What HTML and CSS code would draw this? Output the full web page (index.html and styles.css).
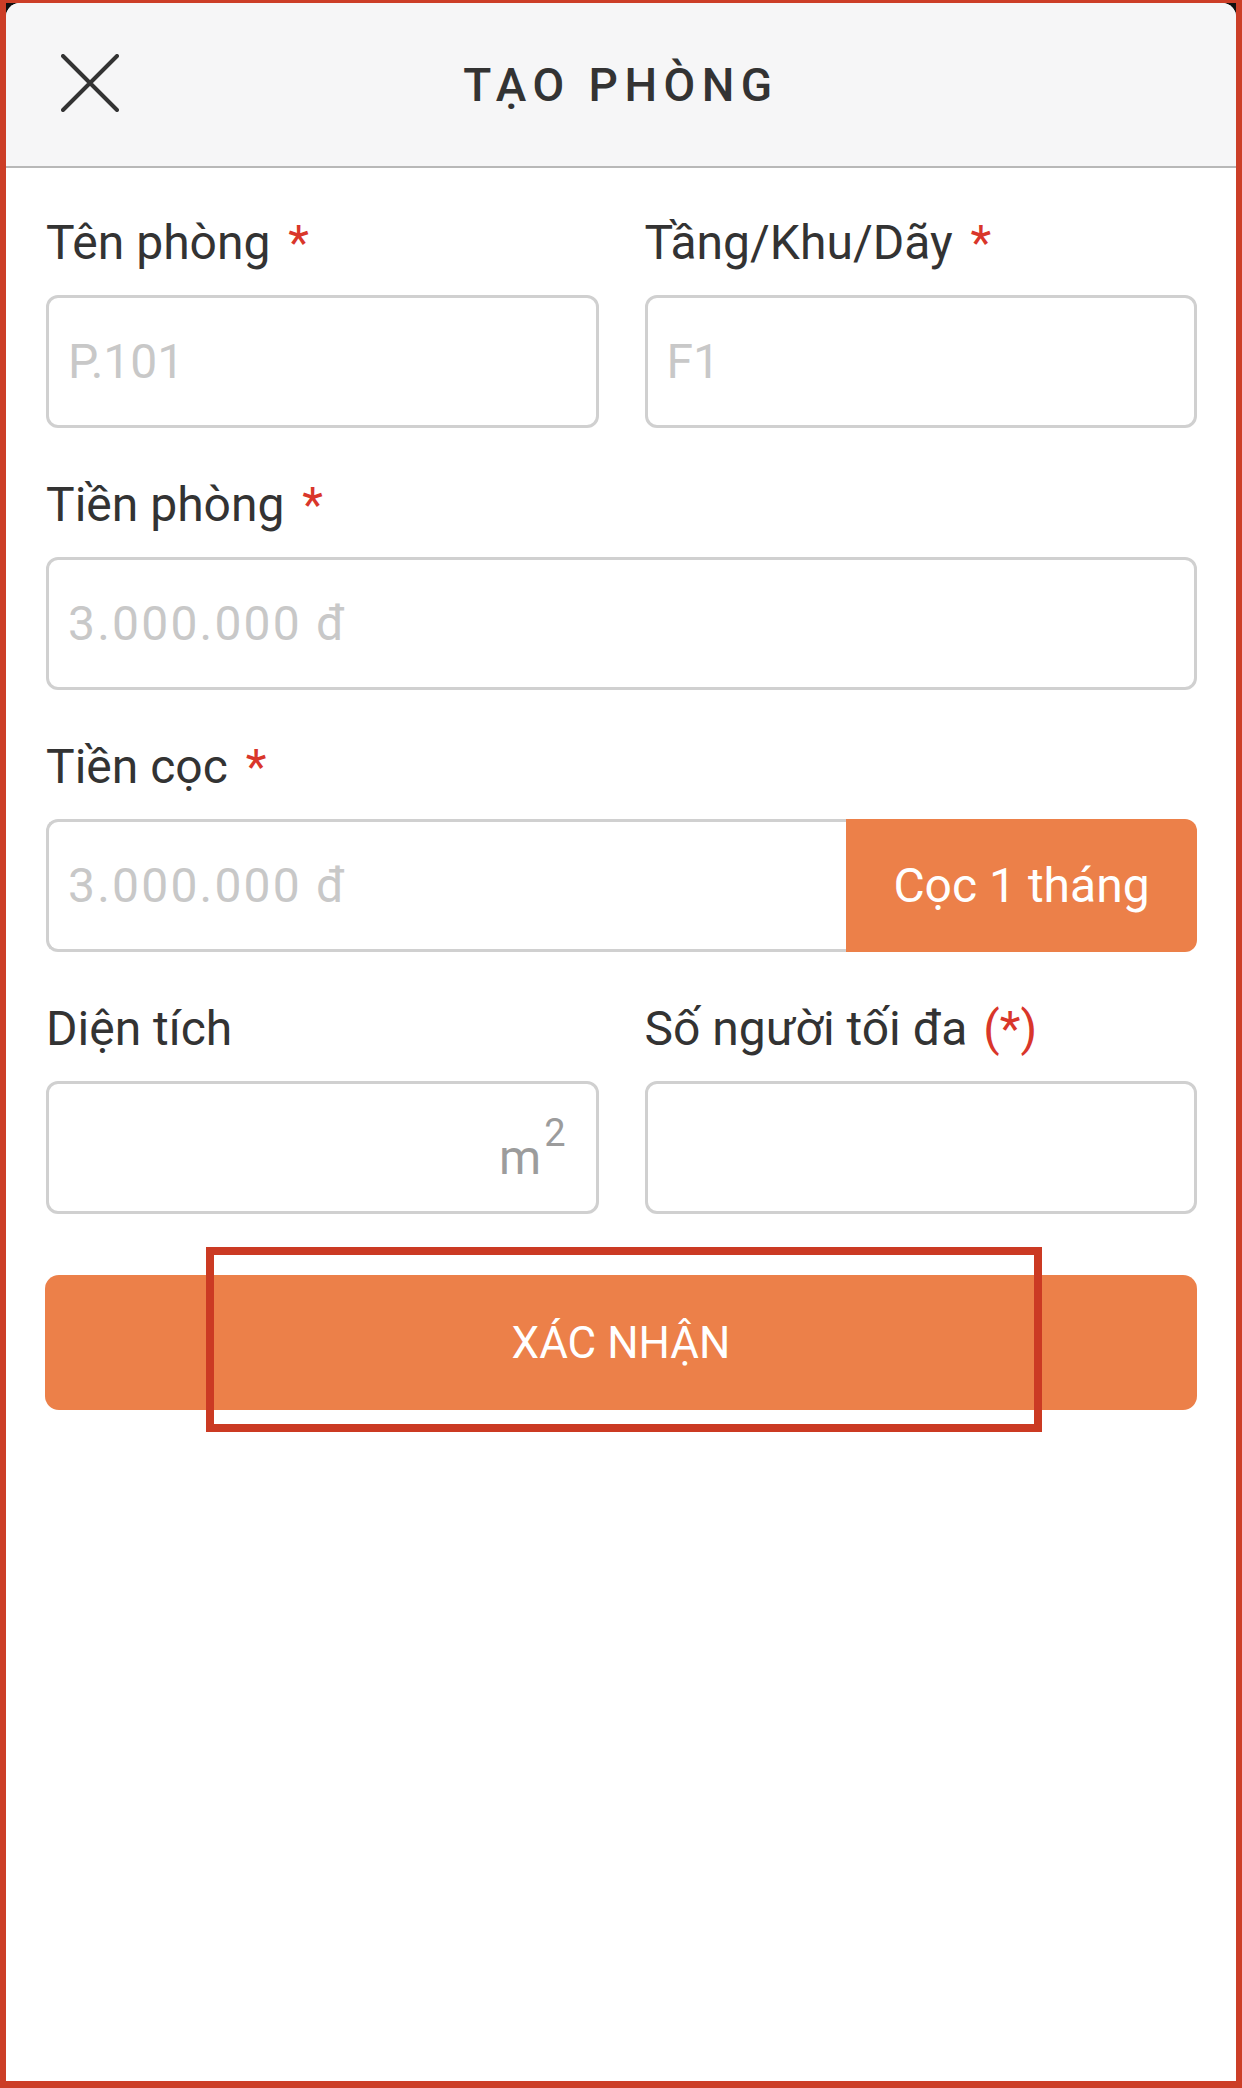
FILE: index.html
```html
<!DOCTYPE html>
<html lang="vi">
<head>
<meta charset="utf-8">
<title>Tạo phòng</title>
<link rel="stylesheet" href="styles.css">
</head>
<body>
<div class="frame">
  <div class="screen">
    <div class="sheet">
      <header class="header">
        <button class="close" aria-label="Đóng">
          <svg width="58" height="58" viewBox="0 0 58 58"><path d="M2 2 L56 56 M56 2 L2 56" stroke="#333" stroke-width="4" stroke-linecap="round" fill="none"/></svg>
        </button>
        <h1 class="title">TẠO PHÒNG</h1>
        <span class="spacer"></span>
      </header>

      <form class="form">
        <div class="row two">
          <div class="field">
            <label class="label">Tên phòng <span class="req">*</span></label>
            <div class="input"><span class="ph">P.101</span></div>
          </div>
          <div class="field">
            <label class="label">Tầng/Khu/Dãy <span class="req">*</span></label>
            <div class="input"><span class="ph">F1</span></div>
          </div>
        </div>

        <div class="row">
          <div class="field">
            <label class="label">Tiền phòng <span class="req">*</span></label>
            <div class="input"><span class="ph money">3.000.000 đ</span></div>
          </div>
        </div>

        <div class="row">
          <div class="field">
            <label class="label">Tiền cọc <span class="req">*</span></label>
            <div class="combo">
              <div class="input combo-input"><span class="ph money">3.000.000 đ</span></div>
              <div class="combo-btn">Cọc 1 tháng</div>
            </div>
          </div>
        </div>

        <div class="row two">
          <div class="field">
            <label class="label">Diện tích</label>
            <div class="input unit-input"><span class="unit">m<sup>2</sup></span></div>
          </div>
          <div class="field">
            <label class="label">Số người tối đa <span class="req paren">(*)</span></label>
            <div class="input"></div>
          </div>
        </div>

        <div class="submit-wrap">
          <div class="submit">XÁC NHẬN</div>
          <div class="highlight"></div>
        </div>
      </form>
    </div>
  </div>
</div>
</body>
</html>
```

FILE: styles.css
```css
* { box-sizing: border-box; }

html, body {
  margin: 0;
  padding: 0;
}

body {
  background: #cc3e27;
  font-family: Roboto, "Liberation Sans", sans-serif;
  color: #333;
}

.frame {
  width: 1242px;
  height: 2088px;
  padding: 3px 6px 7px 6px;
}

.screen {
  height: 100%;
  background: #111;
}

.sheet {
  height: 100%;
  background: #fff;
  border-radius: 14px 14px 0 0;
  overflow: hidden;
}

.header {
  height: 165px;
  background: #f6f6f7;
  border-bottom: 2px solid #b8b8b8;
  display: grid;
  grid-template-columns: 1fr auto 1fr;
  align-items: center;
  padding-left: 55px;
}

.close {
  border: 0;
  background: none;
  padding: 0;
  width: 58px;
  height: 58px;
  justify-self: start;
  display: flex;
  margin-top: -4px;
}

.title {
  margin: 0;
  font-size: 46px;
  font-weight: 500;
  letter-spacing: 6.5px;
  color: #333;
  margin-right: 55px;
}

.form {
  padding: 47px 39px 0 40px;
  display: flex;
  flex-direction: column;
  gap: 49px;
}

.row.two {
  display: grid;
  grid-template-columns: 1fr 1fr;
  column-gap: 46px;
}

.field {
  display: flex;
  flex-direction: column;
}

.label {
  font-size: 48px;
  line-height: 56px;
  margin-bottom: 24px;
  color: #333;
  white-space: nowrap;
}

.req {
  color: #d9362a;
  margin-left: 6px;
}

.req.paren {
  margin-left: 4px;
}

.input {
  height: 133px;
  border: 3px solid #d0d0d0;
  border-radius: 12px;
  display: flex;
  align-items: center;
  padding: 0 19px;
  background: #fff;
}

.ph {
  font-size: 48px;
  color: #c8c8c8;
}

.ph.money {
  letter-spacing: 2.2px;
}

.combo {
  display: flex;
  height: 133px;
}

.combo-input {
  flex: 1;
  border-right: 0;
  border-radius: 12px 0 0 12px;
}

.combo-btn {
  width: 351px;
  background: #ec8049;
  color: #fff;
  border-radius: 0 12px 12px 0;
  font-size: 48px;
  display: flex;
  align-items: center;
  justify-content: center;
}

.unit-input {
  justify-content: flex-end;
  padding-right: 28px;
}

.unit {
  font-size: 48px;
  color: #9c9c9c;
  margin-top: 20px;
  margin-right: 2px;
}

.unit sup {
  font-size: 38px;
  vertical-align: 0;
  position: relative;
  top: -28px;
  margin-left: 3px;
}

.submit-wrap {
  position: relative;
  margin-top: 12px;
  margin-left: -1px;
}

.submit {
  height: 135px;
  background: #ec8049;
  border-radius: 14px;
  color: #fff;
  font-size: 44px;
  display: flex;
  align-items: center;
  justify-content: center;
}

.highlight {
  position: absolute;
  left: 161px;
  top: -28px;
  width: 836px;
  height: 185px;
  border: 8px solid #cb3a23;
}
```
